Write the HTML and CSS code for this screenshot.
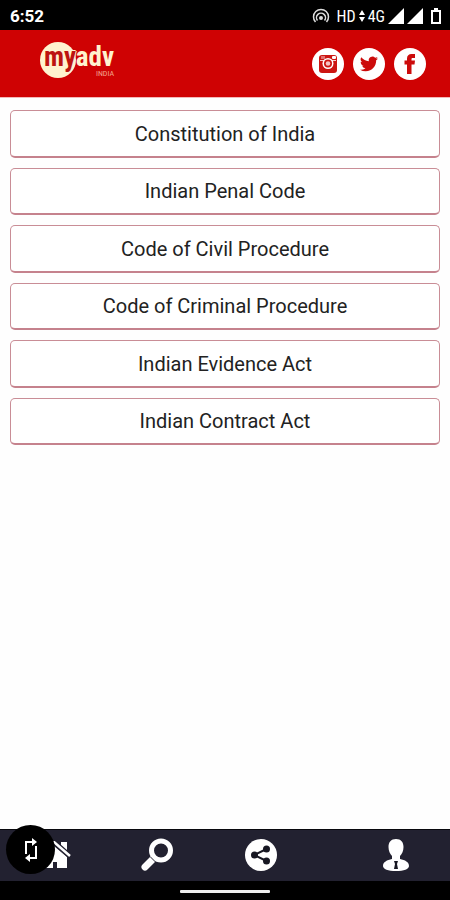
FILE: index.html
```html
<!DOCTYPE html>
<html lang="en">
<head>
<meta charset="utf-8">
<meta name="viewport" content="width=device-width, initial-scale=1">
<title>MyAdv India</title>
<link rel="stylesheet" href="styles.css">
</head>
<body>
<div class="status">
  <span class="clock">6:52</span>
  <div class="signals">
    <svg class="hotspot" width="18" height="16" viewBox="0 0 18 16" fill="none" stroke="#ddd"><path stroke-width="1.500" d="M3.500 14A7.500 7.500 0 1 1 14.500 14M5.500 12.500A4.500 4.500 0 1 1 12.500 12.500"/><circle cx="9" cy="10" r="2" fill="#ddd" stroke="none"/></svg>
    <span class="hd">HD</span>
    <svg width="6" height="12" viewBox="0 0 6 12" fill="#fff"><path d="M3 0l3 5H0zM3 12l3-5H0z"/></svg>
    <span class="net">4G</span>
    <svg width="16" height="16" viewBox="0 0 16 16" fill="#fff"><path d="M16 0v16H0z"/></svg>
    <svg width="16" height="16" viewBox="0 0 16 16" fill="#fff"><path d="M16 0v16H0z"/></svg>
    <svg class="battery" width="12" height="16" viewBox="0 0 12 16" fill="none" stroke="#fff" stroke-width="2"><path d="M2 3h8v12H2z"/><path d="M4 1h4"/></svg>
  </div>
</div>
<header class="header">
  <a class="logo" href="#" aria-label="myadv India">
    <span class="word"><span class="my">my</span>adv</span>
    <span class="country">INDIA</span>
  </a>
  <nav class="social" aria-label="Social">
    <a href="#" aria-label="Instagram"><svg width="32" height="32" viewBox="0 0 32 32"><circle cx="16" cy="16" r="16" fill="#fff"/><rect x="7" y="7" width="18" height="18" rx="3" fill="#cc1512"/><path d="M8 12.500h16M10 8v3M12 8v3" stroke="#f7cccc" stroke-width="1"/><rect x="20" y="8" width="4" height="3" rx="1" fill="#fff"/><circle cx="16" cy="15.500" r="5.500" fill="#fff"/><circle cx="16" cy="15.500" r="4" fill="#cc1512"/><circle cx="16" cy="15.500" r="2.300" fill="#f6c4c4"/></svg></a>
    <a href="#" aria-label="Twitter"><svg width="32" height="32" viewBox="0 0 32 32"><circle cx="16" cy="16" r="16" fill="#fff"/><path transform="translate(7 7) scale(.75)" fill="#cc0b0b" d="M23.950 4.570a10 10 0 0 1-2.820.780 4.960 4.960 0 0 0 2.160-2.730c-.950.560-2 .960-3.130 1.180a4.920 4.920 0 0 0-8.380 4.490A13.970 13.970 0 0 1 1.640 3.160a4.920 4.920 0 0 0 1.520 6.570 4.900 4.900 0 0 1-2.230-.610v.060a4.920 4.920 0 0 0 3.950 4.830 5 5 0 0 1-2.210.080 4.940 4.940 0 0 0 4.600 3.420A9.870 9.870 0 0 1 0 19.540a13.990 13.990 0 0 0 7.550 2.210c9.050 0 14-7.500 14-13.980 0-.210 0-.420-.020-.630a9.940 9.940 0 0 0 2.420-2.570z"/></svg></a>
    <a href="#" aria-label="Facebook"><svg width="32" height="32" viewBox="0 0 32 32"><circle cx="16" cy="16" r="16" fill="#fff"/><path fill="#cc0b0b" d="M13 26V16.500h-2.500V12.500H13v-2C13 7.500 14.800 6 17.500 6H21v4h-2.200c-1 0-1.300.400-1.300 1.300v1.200H21l-.5 4h-3V26z"/></svg></a>
  </nav>
</header>
<main class="content">
  <div class="acts">
    <button type="button">Constitution of India</button>
    <button type="button">Indian Penal Code</button>
    <button type="button">Code of Civil Procedure</button>
    <button type="button">Code of Criminal Procedure</button>
    <button type="button">Indian Evidence Act</button>
    <button type="button">Indian Contract Act</button>
  </div>
</main>
<footer class="footer">
  <nav class="tabs" aria-label="Main">
    <a href="#" aria-label="Home"><svg width="28" height="28" viewBox="0 0 28 28"><path fill="#fff" d="M1 13L11 5l13 11v11H14v-6h-4v6H1zM18 1h6v14l-6-5z"/><path d="M0 10L11 1l16 14" fill="none" stroke="#222130" stroke-width="5"/><path d="M0 10L11 1l16 14" fill="none" stroke="#fff" stroke-width="2.500"/></svg></a>
    <a href="#" aria-label="Search"><svg width="33" height="34" viewBox="0 0 33 34" fill="none" stroke="#fff"><circle cx="20" cy="12.500" r="9.500" stroke-width="5"/><path d="M12 21l-8 8" stroke-width="7" stroke-linecap="round"/><path d="M9.500 19l5 5" stroke="#222130" stroke-width="1"/></svg></a>
    <a href="#" aria-label="Share"><svg width="34" height="34" viewBox="0 0 34 34"><circle cx="17" cy="17" r="16" fill="#fff"/><path d="M22.500 11L10 17l12.500 6" fill="none" stroke="#171722" stroke-width="2"/><g fill="#171722"><circle cx="22.500" cy="11" r="3.500"/><circle cx="10.500" cy="17" r="3.500"/><circle cx="22.500" cy="23" r="3.500"/></g></svg></a>
    <a class="profile" href="#" aria-label="Profile"><svg width="28" height="34" viewBox="0 0 28 34"><path fill="#fff" d="M14 1c5 0 7.500 3 7.500 8 0 4-1.500 7-3.500 9v3c5 1 9 3 9 7 0 3-5 5-13 5S1 31 1 28c0-4 4-6 9-7v-3C8 16 6.500 13 6.500 9c0-5 2.500-8 7.500-8z"/><path fill="#171722" d="M12 23h4l-1 3 1 5h-4l1-5z"/></svg></a>
  </nav>
  <div class="gesture"><span></span></div>
  <button class="rotate" type="button" aria-label="Rotate screen"><svg width="16" height="24" viewBox="0 0 16 24" fill="none" stroke="#fff" stroke-width="2"><path d="M3 16V4h7M13 8v12H6"/><path d="M9 0l5 4-5 4zM7 16l-5 4 5 4z" fill="#fff" stroke="none"/></svg></button>
</footer>
</body>
</html>
```
FILE: styles.css
```css
* { box-sizing: border-box; }

body {
  margin: 0;
  min-height: 100vh;
  display: flex;
  flex-direction: column;
  background: #fefefe;
  font-family: Roboto, "Liberation Sans", sans-serif;
  color: #222;
}

svg { display: block; }

.status {
  display: flex;
  align-items: center;
  justify-content: space-between;
  height: 30px;
  padding: 2px 8px 0 10px;
  background: #000;
  color: #fff;
}

.clock { font-size: 17px; font-weight: 700; }

.signals { display: flex; align-items: center; gap: 3px; }
.hd, .net { font-family: "Roboto Condensed", Roboto, sans-serif; font-size: 16px; }
.hd { margin-left: 4px; }
.battery { margin-left: 4px; }

.header {
  display: flex;
  justify-content: space-between;
  align-items: center;
  height: 68px;
  padding: 0 24px 0 40px;
  background: #cf0203;
  border-bottom: 1px solid #f3b9b9;
}

.logo {
  display: flex;
  flex-direction: column;
  position: relative;
  height: 36px;
  margin-bottom: 8px;
  padding-left: 4px;
  color: #fff3cf;
  font-family: "Roboto Condensed", Roboto, sans-serif;
  font-weight: 700;
  text-decoration: none;
}

.logo::before {
  content: "";
  position: absolute;
  left: 0;
  top: 0;
  width: 36px;
  height: 36px;
  border-radius: 50%;
  background: #fff3cf;
}

.word { position: relative; font-size: 27px; line-height: 30px; }
.my { color: #bd1410; text-shadow: 1px 0 #fff3cf, -1px 0 #fff3cf, 0 1px #fff3cf, 0 -1px #fff3cf; }

.country {
  position: relative;
  align-self: flex-end;
  font-size: 8px;
  line-height: 4px;
  font-weight: 400;
  color: #f3a48c;
}

.social { display: flex; gap: 9px; }

.content { flex: 1; padding: 12px 10px; }

.acts {
  display: grid;
  grid-auto-rows: 1fr;
  gap: 10px;
  min-height: 335px;
}

.acts button {
  padding: 1px 16px 0;
  border: 1px solid #c98d96;
  border-bottom: 2px solid #c5828d;
  border-radius: 5px;
  background: #fff;
  font: 400 20px Roboto, "Liberation Sans", sans-serif;
  color: #222;
}

.footer { position: relative; background: #000; }

.tabs {
  display: flex;
  align-items: center;
  gap: 70px;
  height: 52px;
  padding: 0 40px 2px 43px;
  background: #222130;
  border-top: 1px solid #08080d;
}

.profile { margin-left: auto; }

.gesture { display: flex; justify-content: center; height: 19px; padding-top: 9px; }
.gesture span { width: 90px; height: 3px; border-radius: 1px; background: #eee; }

.rotate {
  position: absolute;
  left: 6px;
  top: -4px;
  display: grid;
  place-items: center;
  width: 49px;
  height: 49px;
  padding: 0;
  border: 0;
  border-radius: 50%;
  background: #000;
}
```
